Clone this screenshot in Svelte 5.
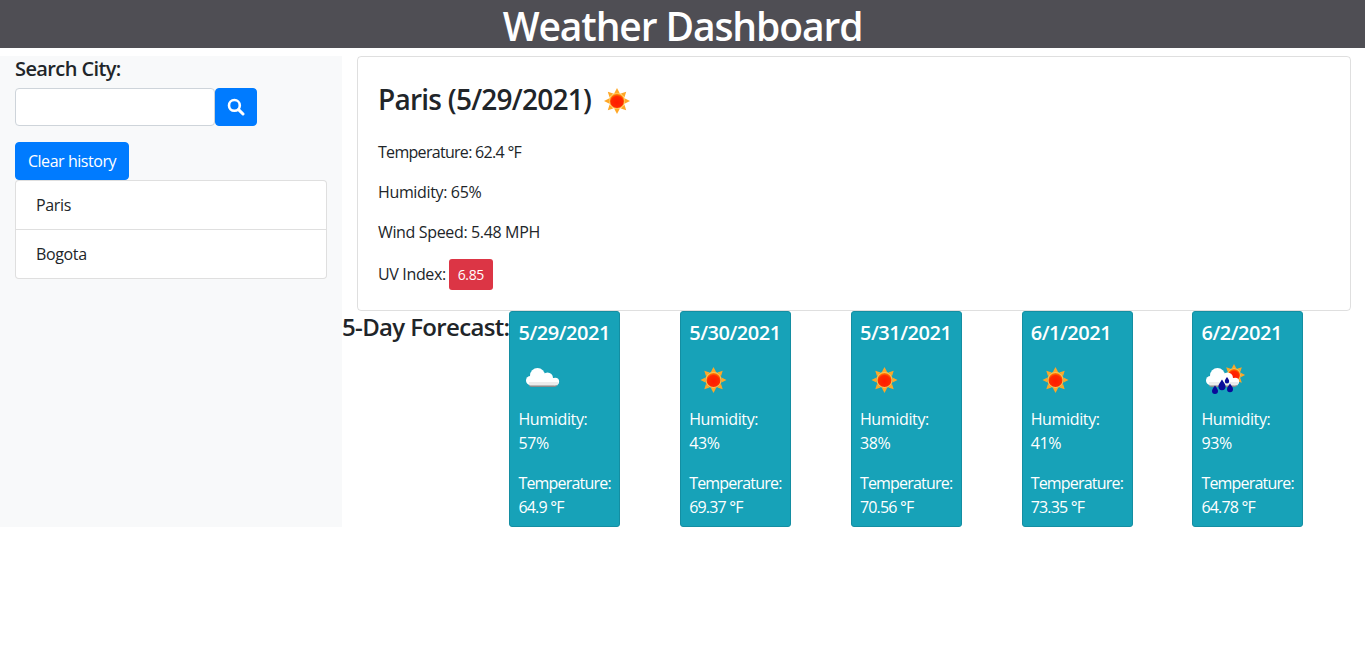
<script>
  const days = [
    { date: '5/29/2021', icon: 'cloud', hum: '57%', temp: '64.9 °F' },
    { date: '5/30/2021', icon: 'sun', hum: '43%', temp: '69.37 °F' },
    { date: '5/31/2021', icon: 'sun', hum: '38%', temp: '70.56 °F' },
    { date: '6/1/2021', icon: 'sun', hum: '41%', temp: '73.35 °F' },
    { date: '6/2/2021', icon: 'rain', hum: '93%', temp: '64.78 °F' }
  ];
  const rays = [0, 45, 90, 135, 180, 225, 270, 315];
</script>

{#snippet sun()}
  <g>
    {#each rays as r}
      <path d="M-2.6 -8 L0 -13 L2.6 -8 Z" fill="#ffa726" transform="rotate({r})" />
    {/each}
    <circle r="8.2" fill="#ffc04d" />
    <circle r="7" fill="url(#sunfill)" />
  </g>
{/snippet}

{#snippet cloudShape()}
  <g fill="#8c8c8c">
    <rect x="3" y="14" width="28" height="5" rx="2.5" />
  </g>
  <g fill="#fff">
    <circle cx="4.5" cy="12.5" r="4.5" />
    <circle cx="11.5" cy="7.5" r="7.5" />
    <circle cx="21.5" cy="10" r="5.5" />
    <circle cx="29.3" cy="13.5" r="3.8" />
    <rect x="4" y="10" width="25" height="7.3" />
  </g>
  <rect x="3" y="14" width="29" height="3.3" fill="#e4e4e4" opacity=".7" />
{/snippet}

{#snippet icon(kind)}
  <svg class="wx" width="50" height="50" viewBox="0 0 50 50" aria-hidden="true">
    {#if kind === 'sun'}
      <g transform="translate(24.5 25)">{@render sun()}</g>
    {:else if kind === 'cloud'}
      <g transform="translate(8 13)">{@render cloudShape()}</g>
    {:else}
      <g transform="translate(33 20) scale(.85)">{@render sun()}</g>
      <g transform="translate(5 13)">{@render cloudShape()}</g>
      <g fill="#0a0a9a">
        <path d="M21 24.5 C23.4 28.5 24.6 29.5 24.6 31.6 A3.6 3.6 0 0 1 17.4 31.6 C17.4 29.5 18.6 28.5 21 24.5 Z" />
        <path d="M14 30.5 C16 33.2 17 34.5 17 36 A3 3 0 0 1 11 36 C11 34.5 12 33.2 14 30.5 Z" />
        <path d="M29 28.5 C31 31.5 32 32.5 32 34.2 A3 3 0 0 1 26 34.2 C26 32.5 27 31.5 29 28.5 Z" />
        <path d="M26 22 C27.4 24 28.2 25 28.2 26.2 A2.2 2.2 0 0 1 23.8 26.2 C23.8 25 24.6 24 26 22 Z" />
      </g>
    {/if}
  </svg>
{/snippet}

<svg class="defs" width="0" height="0" aria-hidden="true">
  <defs>
    <radialGradient id="sunfill" cx="50%" cy="60%" r="60%">
      <stop offset="0%" stop-color="#ff1a00" />
      <stop offset="70%" stop-color="#ff2a00" />
      <stop offset="100%" stop-color="#ff8a00" />
    </radialGradient>
  </defs>
</svg>

<header><h1>Weather Dashboard</h1></header>

<div class="row">
  <aside>
    <h5>Search City:</h5>
    <div class="search">
      <input type="text" aria-label="Search City" />
      <button class="btn icon-btn" aria-label="Search">
        <svg width="18" height="18" viewBox="0 0 18 18"><circle cx="7.4" cy="7.4" r="5.4" fill="none" stroke="#fff" stroke-width="2.6" /><path d="M11.6 11.6 L16 16" stroke="#fff" stroke-width="3" stroke-linecap="round" /></svg>
      </button>
    </div>
    <button class="btn clear">Clear history</button>
    <ul>
      <li>Paris</li>
      <li>Bogota</li>
    </ul>
  </aside>

  <main>
    <section class="today">
      <div class="title">
        <h3>Paris (5/29/2021)</h3>
        <svg width="50" height="50" viewBox="0 0 50 50" aria-hidden="true"><g transform="translate(25 25)">{@render sun()}</g></svg>
      </div>
      <p class="temp">Temperature: 62.4 °F</p>
      <p>Humidity: 65%</p>
      <p>Wind Speed: 5.48 MPH</p>
      <p class="uv">UV Index: <span class="badge">6.85</span></p>
    </section>

    <div class="forecast">
      <h4>5-Day Forecast:</h4>
      <div class="slots">
        {#each days as d}
          <div class="slot">
            <article class="card">
              <h5>{d.date}</h5>
              {@render icon(d.icon)}
              <p>Humidity: {d.hum}</p>
              <p class="temp">Temperature: {d.temp}</p>
            </article>
          </div>
        {/each}
      </div>
    </div>
  </main>
</div>

<style>
  :global(body) {
    margin: 0;
    background: #fff;
    color: #212529;
    font-family: "Open Sans", "Noto Sans", sans-serif;
    font-size: 16px;
    line-height: 24px;
    letter-spacing: -0.35px;
  }
  .defs { position: absolute; }
  header {
    background: #4f4e54;
    height: 48px;
    box-sizing: border-box;
    padding-top: 4px;
    text-align: center;
    color: #fff;
  }
  h1 { margin: 0; font-size: 39px; line-height: 44px; font-weight: 600; letter-spacing: -1.1px; }
  h3, h4, h5 { margin: 0; font-weight: 600; }
  .row { display: flex; align-items: flex-start; }
  aside {
    width: 342px;
    box-sizing: border-box;
    margin-top: 8px;
    height: 471px;
    background: #f8f9fa;
    padding: 0 15px;
  }
  aside h5 { font-size: 20px; line-height: 24px; margin-bottom: 7px; margin-top: 1px; letter-spacing: -0.6px; }
  .search { display: flex; margin-bottom: 16px; }
  input {
    width: 200px;
    height: 38px;
    box-sizing: border-box;
    border: 1px solid #ced4da;
    border-radius: 4px;
    background: #fff;
    padding: 6px 12px;
  }
  .btn {
    background: #007bff;
    border: 1px solid #007bff;
    border-radius: 4px;
    color: #fff;
    font: inherit;
    letter-spacing: inherit;
    height: 38px;
    box-sizing: border-box;
    padding: 6px 12px;
  }
  .icon-btn { width: 42px; display: flex; align-items: center; justify-content: center; padding: 0; }
  .clear { display: block; width: 114px; padding: 6px 0; letter-spacing: -0.45px; }
  ul {
    list-style: none;
    margin: 0;
    padding: 0;
    width: 312px;
    box-sizing: border-box;
    background: #fff;
    border: 1px solid rgba(0,0,0,.125);
    border-radius: 4px;
  }
  li { padding: 12px 20px; height: 48px; box-sizing: border-box; }
  li + li { border-top: 1px solid rgba(0,0,0,.125); height: 49px; }
  main { flex: 1; min-width: 0; padding-top: 8px; }
  .today {
    margin: 0 14px 0 15px;
    height: 255px;
    box-sizing: border-box;
    border: 1px solid rgba(0,0,0,.125);
    border-radius: 4px;
    padding: 18px 20px 20px;
  }
  .title { display: flex; align-items: center; height: 48px; margin-bottom: 17px; }
  .title svg { margin: 4px 0 0 1px; }
  h3 { font-size: 28px; line-height: 48px; letter-spacing: -0.75px; }
  .today p { margin: 0 0 16px; }
  .today p.temp { letter-spacing: -0.7px; }
  .card p.temp { letter-spacing: -0.8px; }
  .today p.uv { margin: -1px 0 0; }
  .badge {
    display: inline-block;
    background: #dc3545;
    color: #fff;
    font-size: 14px;
    line-height: 21px;
    padding: 5px 9px;
    margin-left: -1px;
    border-radius: 3px;
  }
  .forecast { display: flex; align-items: flex-start; }
  h4 { width: 167.4px; flex: none; font-size: 24px; line-height: 29px; margin-top: 1px; white-space: nowrap; letter-spacing: -0.65px; }
  .slots { display: flex; }
  .slot { width: 170.75px; flex: none; }
  .card {
    width: 111px;
    height: 216px;
    box-sizing: border-box;
    background: #17a2b8;
    border: 1px solid #148ea2;
    border-radius: 3px;
    color: #fff;
    padding: 9px 8px;
  }
  .card h5 { font-size: 20px; line-height: 24px; white-space: nowrap; letter-spacing: -0.45px; }
  .wx { display: block; margin: 10px 0 2px; }
  .card p { margin: 0 0 16px; }
  .card p:last-child { margin: 0; }
</style>
